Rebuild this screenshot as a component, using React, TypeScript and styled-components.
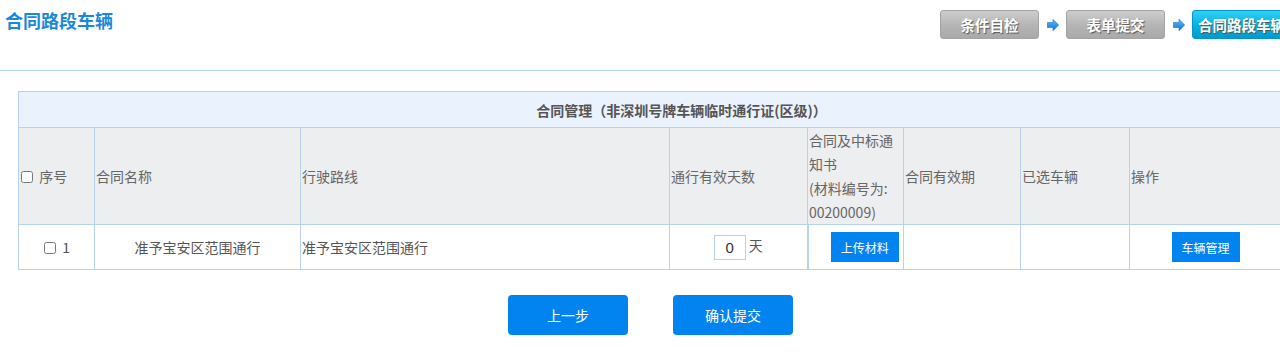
import styled, { createGlobalStyle } from "styled-components";

const GlobalStyle = createGlobalStyle`
  html, body {
    margin: 0;
    padding: 0;
    background: #fff;
    overflow: hidden;
  }
  body {
    font-family: "Noto Sans CJK SC", "Liberation Sans", sans-serif;
    color: #555;
  }
`;

interface Row {
  id: number;
  name: string;
  route: string;
  days: number;
}

const rows: Row[] = [
  { id: 1, name: "准予宝安区范围通行", route: "准予宝安区范围通行", days: 0 },
];

const steps = ["条件自检", "表单提交", "合同路段车辆"];

const Arrow = () => (
  <ArrowIcon width="12" height="12" viewBox="0 0 12 12">
    <defs>
      <linearGradient id="arr" x1="0" y1="0" x2="0" y2="1">
        <stop offset="0" stopColor="#5cc0ff" />
        <stop offset="1" stopColor="#0a6fd8" />
      </linearGradient>
    </defs>
    <polygon
      points="0.3,3.5 6,3.5 6,0.3 11.7,6 6,11.7 6,8.5 0.3,8.5"
      fill="url(#arr)"
      stroke="#1a74c8"
      strokeWidth="0.6"
    />
  </ArrowIcon>
);

const App = () => {
  return (
    <Page>
      <GlobalStyle />
      <TopBar>
        <Title>合同路段车辆</Title>
        <Steps>
          {steps.map((s, i) => (
            <StepItem key={s}>
              {i > 0 && <Arrow />}
              <StepButton $active={i === steps.length - 1}>{s}</StepButton>
            </StepItem>
          ))}
        </Steps>
      </TopBar>
      <Table>
        <colgroup>
          <col style={{ width: 76 }} />
          <col style={{ width: 206 }} />
          <col style={{ width: 369 }} />
          <col style={{ width: 138 }} />
          <col style={{ width: 96 }} />
          <col style={{ width: 117 }} />
          <col style={{ width: 109 }} />
          <col />
        </colgroup>
        <thead>
          <tr>
            <Caption colSpan={8}>合同管理（非深圳号牌车辆临时通行证(区级)）</Caption>
          </tr>
          <tr>
            <Th>
              <Check type="checkbox" /> 序号
            </Th>
            <Th>合同名称</Th>
            <Th>行驶路线</Th>
            <Th>通行有效天数</Th>
            <Th>
              合同及中标通
              <br />
              知书
              <br />
              (材料编号为:
              <br />
              00200009)
            </Th>
            <Th>合同有效期</Th>
            <Th>已选车辆</Th>
            <Th>操作</Th>
          </tr>
        </thead>
        <tbody>
          {rows.map((r) => (
            <tr key={r.id}>
              <Td $align="center">
                <Check type="checkbox" /> {r.id}
              </Td>
              <Td $align="center">{r.name}</Td>
              <Td>{r.route}</Td>
              <Td $align="center">
                <DaysInput defaultValue={r.days} /> 天
              </Td>
              <Td $align="center" $thick>
                <SmallButton>上传材料</SmallButton>
              </Td>
              <Td />
              <Td />
              <Td $align="center" $padRight={20}>
                <SmallButton>车辆管理</SmallButton>
              </Td>
            </tr>
          ))}
        </tbody>
      </Table>
      <Footer>
        <BigButton>上一步</BigButton>
        <BigButton>确认提交</BigButton>
      </Footer>
    </Page>
  );
};

const Page = styled.div`
  width: 1301px;
`;

const TopBar = styled.div`
  height: 70px;
  border-bottom: 1px solid #b3d6f2;
  display: flex;
  justify-content: space-between;
  align-items: flex-start;
  padding: 0 10px 0 5px;
`;

const Title = styled.h1`
  margin: 8px 0 0;
  font-size: 18px;
  font-weight: bold;
  color: #1a88d8;
  line-height: 24px;
`;

const Steps = styled.div`
  display: flex;
  margin-top: 10px;
`;

const StepItem = styled.div`
  display: flex;
  align-items: center;
`;

const ArrowIcon = styled.svg`
  margin: 0 7px 0 8px;
`;

const StepButton = styled.div<{ $active?: boolean }>`
  width: 99px;
  height: 29px;
  box-sizing: border-box;
  border-radius: 3px;
  display: flex;
  align-items: center;
  justify-content: center;
  white-space: nowrap;
  font-size: 14.5px;
  font-weight: bold;
  color: #fff;
  text-shadow: 1px 1px 1px #555;
  border: 1px solid ${(p) => (p.$active ? "#0596c8" : "#a3a3a3")};
  background: ${(p) =>
    p.$active
      ? "linear-gradient(#2fd0f4, #07b0e0 55%, #0399cc)"
      : "linear-gradient(#cdcdcd, #b4b4b4 55%, #a9a9a9)"};
`;

const Table = styled.table`
  margin: 20px 0 0 18px;
  width: 1265px;
  border-collapse: collapse;
  table-layout: fixed;
  font-size: 14px;
  border: 1px solid #b5d3ef;
`;

const Caption = styled.th`
  height: 35px;
  background: #eaf2fd;
  border: 1px solid #b5d3ef;
  font-weight: bold;
  color: #555;
  padding: 0 0 0 62px;
  font-size: 14px;
`;

const Th = styled.th`
  background: #edeef0;
  border: 1px solid #b5d3ef;
  font-weight: normal;
  color: #666;
  text-align: left;
  padding: 0 1px;
  line-height: 24px;
  white-space: nowrap;
`;

const Td = styled.td<{ $align?: string; $thick?: boolean; $padRight?: number }>`
  height: 44px;
  border: 1px solid #b5d3ef;
  border-left-width: ${(p) => (p.$thick ? "2px" : "1px")};
  text-align: ${(p) => p.$align || "left"};
  color: #555;
  padding: 0 ${(p) => p.$padRight || 1}px 0 1px;
  white-space: nowrap;
`;

const Check = styled.input`
  width: 12px;
  height: 12px;
  margin: 0 3px 0 1px;
  vertical-align: -1px;
`;

const DaysInput = styled.input`
  width: 32px;
  height: 25px;
  box-sizing: border-box;
  border: 1px solid #b5d3ef;
  text-align: center;
  font-size: 15px;
  color: #333;
  font-family: "Liberation Sans", sans-serif;
  padding: 0;
  vertical-align: middle;
`;

const SmallButton = styled.button`
  width: 68px;
  height: 30px;
  border: none;
  background: #0284f0;
  color: #fff;
  font-size: 12px;
  font-family: "Noto Sans CJK SC", sans-serif;
  padding: 0;
  cursor: pointer;
  vertical-align: middle;
  margin-left: 18px;
`;

const Footer = styled.div`
  display: flex;
  justify-content: center;
  gap: 45px;
  margin-top: 25px;
`;

const BigButton = styled.button`
  width: 120px;
  height: 40px;
  border: none;
  border-radius: 4px;
  background: #0284f0;
  color: #fff;
  font-size: 14px;
  font-family: "Noto Sans CJK SC", sans-serif;
  cursor: pointer;
`;

export default App;
